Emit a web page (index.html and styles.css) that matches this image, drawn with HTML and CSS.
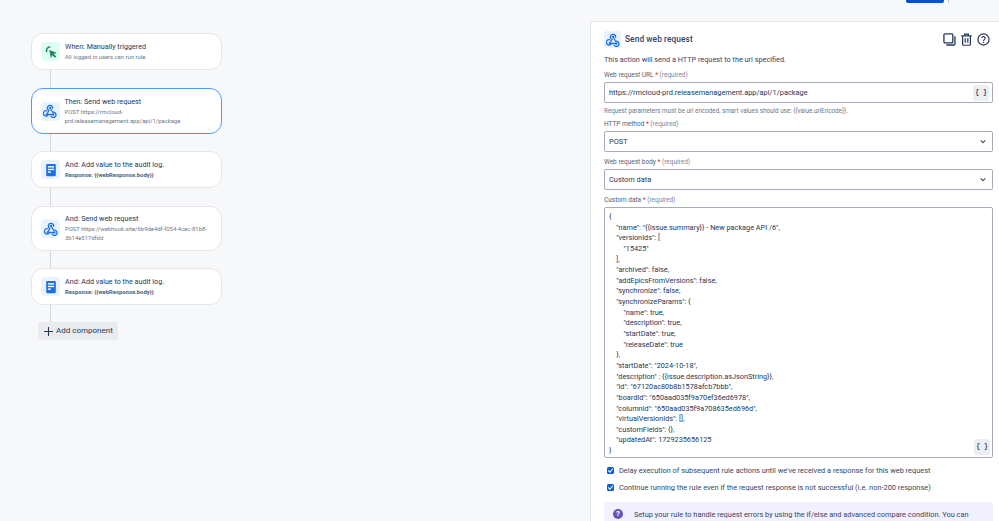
FILE: index.html
```html
<!DOCTYPE html>
<html lang="en">
<head>
<meta charset="utf-8">
<title>Send web request</title>
<link rel="stylesheet" href="styles.css">
</head>
<body>
<svg class="defs" width="0" height="0" aria-hidden="true">
  <symbol id="hook" viewBox="0 0 16 16">
    <path d="M4.200 12 L6.900 7.300 A3 3 0 1 1 11 4.800" fill="none" stroke="currentColor" stroke-width="1.500" stroke-linecap="round"/>
    <path d="M8 4.300 L11 9.400 A3 3 0 1 1 9.300 14" fill="none" stroke="currentColor" stroke-width="1.500" stroke-linecap="round"/>
    <path d="M11.800 12 H6.200 A3 3 0 1 1 4.300 7.800" fill="none" stroke="currentColor" stroke-width="1.500" stroke-linecap="round"/>
    <circle cx="8" cy="4.300" r="1.300" fill="currentColor"/>
    <circle cx="4.200" cy="12" r="1.300" fill="currentColor"/>
    <circle cx="11.800" cy="12" r="1.300" fill="currentColor"/>
  </symbol>
  <symbol id="doc" viewBox="0 0 16 16">
    <rect x="2.500" y="1" width="11" height="14" rx="1.200" fill="currentColor"/>
    <rect x="4.500" y="3.600" width="7" height="1.600" fill="#fff"/>
    <rect x="4.500" y="6.600" width="7" height="1.600" fill="#fff"/>
    <rect x="4.500" y="9.600" width="3.200" height="1.600" fill="#fff"/>
  </symbol>
  <symbol id="cursor" viewBox="0 0 16 16">
    <path d="M6.600 2.400a4 4 0 0 0-3.600 5.200" fill="none" stroke="currentColor" stroke-width="1.700" stroke-linecap="round"/>
    <path d="M6 5.600l8.600 3.200-3.500 1.400 2.900 3-1.500 1.400-2.900-3L8 15z" fill="currentColor"/>
  </symbol>
</svg>

<header class="topbar"><span class="publish"></span><span class="tick"></span></header>

<main class="main">
  <section class="flow">
    <article class="node node-short">
      <span class="tile tile-green"><svg class="glyph"><use href="#cursor"/></svg></span>
      <div class="copy"><h2>When: Manually triggered</h2><p>All logged in users can run rule.</p></div>
    </article>
    <span class="wire"></span>
    <article class="node node-tall node-active">
      <span class="tile"><svg class="glyph"><use href="#hook"/></svg></span>
      <div class="copy"><h2>Then: Send web request</h2><p>POST https://rmcloud-<br>prd.releasemanagement.app/api/1/package</p></div>
    </article>
    <span class="wire wire-b"></span>
    <article class="node node-short">
      <span class="tile"><svg class="glyph"><use href="#doc"/></svg></span>
      <div class="copy"><h2>And: Add value to the audit log.</h2><p class="strong">Response: {{webResponse.body}}</p></div>
    </article>
    <span class="wire"></span>
    <article class="node node-tall">
      <span class="tile"><svg class="glyph"><use href="#hook"/></svg></span>
      <div class="copy"><h2>And: Send web request</h2><p>POST https://webhook.site/6b9de4df-f054-4cec-81b8-<br>3b14e517dfdd</p></div>
    </article>
    <span class="wire wire-b"></span>
    <article class="node node-short">
      <span class="tile"><svg class="glyph"><use href="#doc"/></svg></span>
      <div class="copy"><h2>And: Add value to the audit log.</h2><p class="strong">Response: {{webResponse.body}}</p></div>
    </article>
    <span class="wire wire-c"></span>
    <button class="add" type="button">
      <svg class="add-plus" viewBox="0 0 10 10"><path d="M5 0v10M0 5h10" stroke="currentColor" stroke-width="1.200" fill="none"/></svg>Add component
    </button>
  </section>

  <section class="panel">
    <div class="panel-head">
      <span class="tile tile-head"><svg class="glyph"><use href="#hook"/></svg></span>
      <h1>Send web request</h1>
      <div class="tools">
        <svg class="tool" viewBox="0 0 14 14"><rect x="1" y="1" width="9.600" height="9.600" rx="1" fill="none" stroke="currentColor" stroke-width="1.400"/><path d="M12.900 3.600v8.300a1 1 0 0 1-1 1H3.600" fill="none" stroke="currentColor" stroke-width="1.400"/></svg>
        <svg class="tool" viewBox="0 0 14 14"><path d="M1.400 3h11.200M5 3V1.200h4V3M2.800 3v9.200a1 1 0 0 0 1 1h6.400a1 1 0 0 0 1-1V3" fill="none" stroke="currentColor" stroke-width="1.300"/><path d="M5.600 5.600v5M8.400 5.600v5" stroke="currentColor" stroke-width="1.300"/></svg>
        <svg class="tool" viewBox="0 0 14 14"><circle cx="7" cy="7" r="6" fill="none" stroke="currentColor" stroke-width="1.300"/><path d="M5.200 5.500a1.800 1.800 0 1 1 2.700 1.600c-.6.400-.9.700-.9 1.400" fill="none" stroke="currentColor" stroke-width="1.200"/><circle cx="7" cy="10.300" r=".8" fill="currentColor"/></svg>
      </div>
    </div>
    <p class="intro">This action will send a HTTP request to the url specified.</p>

    <label class="label label-url">Web request URL <b>*</b> <i>(required)</i></label>
    <div class="field field-url"><span>https://rmcloud-prd.releasemanagement.app/api/1/package</span><span class="smart">{ }</span></div>
    <p class="hint">Request parameters must be url encoded, smart values should use: {{value.urlEncode}}.</p>

    <label class="label label-method">HTTP method <b>*</b> <i>(required)</i></label>
    <div class="field field-select"><span>POST</span><svg class="chev" viewBox="0 0 8 6"><path d="M1 1.500l3 3 3-3" fill="none" stroke="currentColor" stroke-width="1.500"/></svg></div>

    <label class="label label-body">Web request body <b>*</b> <i>(required)</i></label>
    <div class="field field-select"><span>Custom data</span><svg class="chev" viewBox="0 0 8 6"><path d="M1 1.500l3 3 3-3" fill="none" stroke="currentColor" stroke-width="1.500"/></svg></div>

    <label class="label label-body">Custom data <b>*</b> <i>(required)</i></label>
    <div class="code-box">
<pre class="code">{
    "name": "{{issue.summary}} - New package API /6",
    "versionIds": [
        "15425"
    ],
    "archived": false,
    "addEpicsFromVersions": false,
    "synchronize": false,
    "synchronizeParams": {
        "name": true,
        "description": true,
        "startDate": true,
        "releaseDate": true
    },
    "startDate": "2024-10-18",
    "description" : {{issue.description.asJsonString}},
    "id": "67120ac80b8b1578afcb7bbb",
    "boardId": "650aad035f9a70ef36ed6978",
    "columnId": "650aad035f9a708635ed696d",
    "virtualVersionIds": [],
    "customFields": {},
    "updatedAt": 1729235656125
}</pre>
      <span class="smart smart-code">{ }</span>
    </div>

    <div class="check check-first"><span class="box"><svg viewBox="0 0 8 8"><path d="M1.500 4l2 2 3-4" fill="none" stroke="#fff" stroke-width="1.300"/></svg></span>Delay execution of subsequent rule actions until we've received a response for this web request</div>
    <div class="check"><span class="box"><svg viewBox="0 0 8 8"><path d="M1.500 4l2 2 3-4" fill="none" stroke="#fff" stroke-width="1.300"/></svg></span>Continue running the rule even if the request response is not successful (i.e. non-200 response)</div>

    <div class="note">
      <span class="note-icon">?</span>
      <p>Setup your rule to handle request errors by using the if/else and advanced compare condition. You can</p>
    </div>
  </section>
</main>
</body>
</html>
```
FILE: styles.css
```css
* { box-sizing: border-box; }
html, body { margin: 0; height: 521px; overflow: hidden; }
body {
  background: #f7f8f9;
  color: #172b4d;
  font-family: Roboto, "Noto Sans", sans-serif;
}
.defs { position: absolute; }
.topbar { display: flex; height: 3px; justify-content: flex-end; align-items: flex-start; padding-right: 50px; gap: 4px; }
.publish { width: 38px; height: 3px; background: #0052cc; border-radius: 0 0 2px 2px; }
.tick { width: 1px; height: 3px; background: #c1c7d0; }
.main { display: flex; padding-top: 18px; align-items: flex-start; }

.flow { width: 191px; margin: 12px 0 0 31px; display: flex; flex-direction: column; align-items: flex-start; flex: none; }
.node {
  width: 191px; display: flex; align-items: center; gap: 5px; padding: 0 9px;
  background: #fff; border: 1px solid #e4e6ea; border-radius: 12px;
}
.node-short { height: 37px; }
.node-tall { height: 45px; }
.node-active { height: 46px; border: 1.500px solid #4c9aff; border-radius: 12px; padding-left: 8.500px; }
.wire { width: 1px; height: 18px; margin-left: 19px; background: #d3d6db; }
.wire-b { height: 17px; }
.wire-c { height: 17px; }
.tile {
  width: 19px; height: 19px; flex: none; display: flex; align-items: center; justify-content: center;
  background: #e9f2ff; color: #1d6fe8; border-radius: 4px;
}
.tile-green { background: #dcfff1; color: #1f845a; }
.glyph { width: 14px; height: 14px; }
.copy { min-width: 0; }
.copy h2 { margin: 0; font-size: 7.200px; line-height: 10px; font-weight: 400; color: #253858; white-space: nowrap; }
.copy p { margin: 1px 0 0; font-size: 5.900px; line-height: 9px; color: #6b778c; white-space: nowrap; }
.copy p.strong { font-weight: 700; color: #505f79; }
.add {
  width: 80px; height: 18px; margin-left: 7px; padding: 0 0 0 6px; display: flex; align-items: center; gap: 3px;
  background: #e9ebee; color: #253858; border: 0; border-radius: 2px;
  font: 400 8px/18px Roboto, "Noto Sans", sans-serif; white-space: nowrap;
}
.add-plus { width: 9px; height: 9px; flex: none; }

.panel {
  margin-left: 368px; width: 409px; height: 520px; padding: 9px 6px 0 13px; flex: none;
  background: #fff; border: 1px solid #e4e6ea; border-right: 0; border-bottom: 0; border-radius: 3px 0 0 0;
}
.panel-head { display: flex; align-items: center; height: 17px; }
.tile-head { width: 17px; height: 17px; margin-right: 4px; border-radius: 3px; }
.panel-head h1 { margin: 0; font-size: 8.300px; line-height: 17px; font-weight: 500; color: #344563; letter-spacing: .1px; }
.tools { margin-left: auto; display: flex; gap: 4px; color: #253858; padding-right: 3px; }
.tool { width: 13px; height: 13px; }
.intro { margin: 7px 0 0; font-size: 7.300px; line-height: 10px; color: #344563; white-space: nowrap; }
.label { display: block; font-size: 6.500px; line-height: 9px; color: #505f79; white-space: nowrap; }
.label b { color: #de350b; font-weight: 400; }
.label i { font-style: normal; color: #7a869a; }
.label-url { margin-top: 6px; }
.label-method { margin-top: 4px; }
.label-body { margin-top: 6px; }
.field {
  display: flex; align-items: center; justify-content: space-between;
  width: 389px; height: 21px; margin-top: 2px; padding: 0 3px 0 4px;
  background: #fff; border: 1px solid #a5adba; border-radius: 2px;
  font-size: 7.400px; color: #253858; white-space: nowrap;
}
.field-select { padding-right: 6px; }
.smart {
  width: 16px; height: 16px; display: flex; align-items: center; justify-content: center; flex: none;
  background: #eceef1; border-radius: 2px; font: 700 6.500px/16px "Liberation Mono", monospace; color: #344563; white-space: nowrap;
}
.hint { margin: 4px 0 0; font-size: 6.300px; line-height: 9px; color: #6b778c; white-space: nowrap; }
.chev { width: 6px; height: 5px; color: #42526e; }
.code-box {
  position: relative; width: 389px; height: 251px; margin-top: 2px; padding: 4px 4px;
  background: #fff; border: 1px solid #a5adba; border-radius: 2px;
}
.code { margin: 0; font: 400 7.300px/10.640px Roboto, "Noto Sans", sans-serif; color: #253858; white-space: pre; tab-size: 4; }
.smart-code { position: absolute; right: 2px; bottom: 2px; }
.check { display: flex; align-items: center; gap: 5px; padding-left: 3px; margin-top: 8px; height: 9px; font-size: 7.400px; line-height: 9px; color: #344563; white-space: nowrap; }
.box { width: 7px; height: 7px; flex: none; display: flex; background: #0c5cd6; border-radius: 1.500px; }
.box svg { width: 7px; height: 7px; }
.note { display: flex; align-items: flex-start; gap: 11px; width: 389px; height: 40px; margin-top: 10px; padding: 7px 9px; background: #f3f0ff; border-radius: 3px; }
.note-icon { width: 10px; height: 10px; flex: none; display: flex; align-items: center; justify-content: center; border-radius: 50%; background: #6554c0; color: #fff; font-size: 8px; line-height: 10px; font-weight: 700; }
.note p { margin: 0; font-size: 7.400px; line-height: 11px; color: #344563; white-space: nowrap; }
```
